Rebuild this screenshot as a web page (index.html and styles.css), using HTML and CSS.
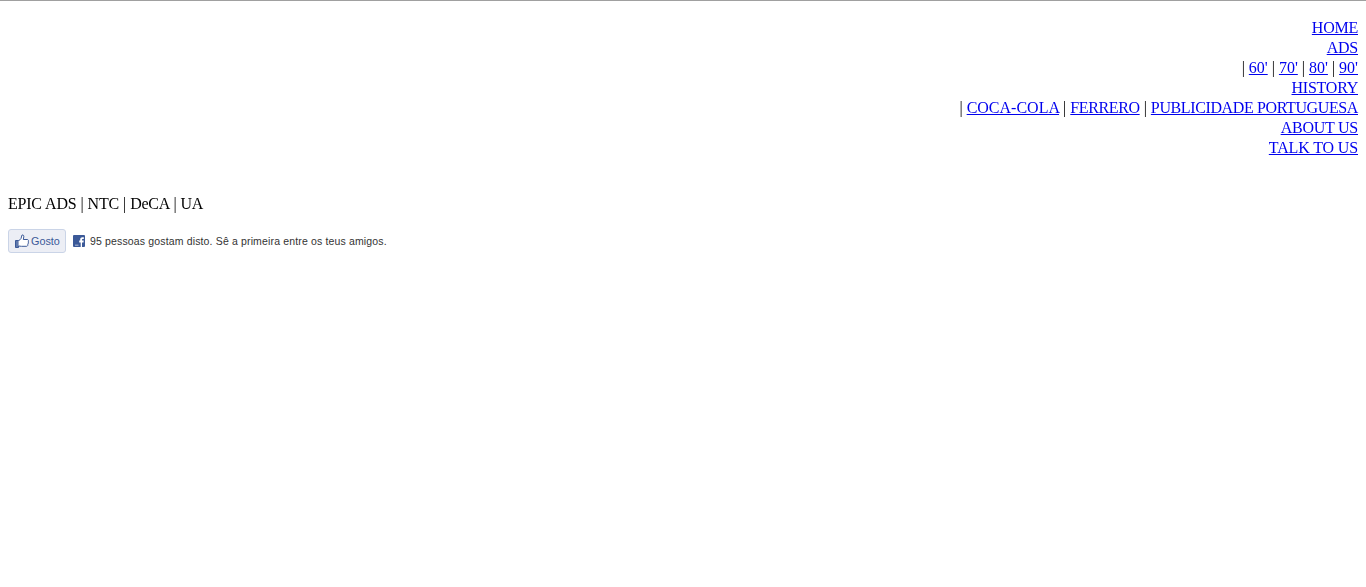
FILE: index.html
```html
<!DOCTYPE html>
<html lang="pt">
<head>
<meta charset="utf-8">
<title>Epic Ads</title>
<link rel="stylesheet" href="styles.css">
</head>
<body>
<nav class="nav">
<div><a class="caps" href="#">HOME</a></div>
<div><a class="caps" href="#">ADS</a></div>
<div>| <a href="#">60'</a> | <a href="#">70'</a> | <a href="#">80'</a> | <a href="#">90'</a></div>
<div><a class="caps" href="#">HISTORY</a></div>
<div>| <a href="#">COCA-COLA</a> | <a class="tight" href="#">FERRERO</a> | <a class="tight" href="#">PUBLICIDADE PORTUGUESA</a></div>
<div><a class="caps" href="#">ABOUT US</a></div>
<div><a class="loose" href="#">TALK TO US</a></div>
</nav>
<p class="credits">EPIC ADS | NTC | DeCA | UA</p>
<div class="like">
<button class="like-btn" type="button">
<svg class="thumb" width="14" height="14" viewBox="0 0 14 14"><path d="M.5 6.500h3v7h-3z" fill="#5f78ab" stroke="#3b5998"/><path d="M3.500 7 6 4.500 7 1c1.300-.3 2 .6 1.800 1.800L8.300 5.500h4c1 0 1.400 1 1 1.700.4.600.3 1.300-.2 1.800.3.600.1 1.300-.4 1.700.2.700-.2 1.600-1.100 1.600H6.500L3.500 12" fill="#fff" stroke="#3b5998"/></svg>
<span>Gosto</span>
</button>
<svg class="fb" width="12" height="12" viewBox="0 0 12 12"><rect width="12" height="12" rx="1" fill="#3b5998"/><path d="M9 12V7.400h1.500l.2-1.800H9V4.700c0-.5.200-.8.900-.8h.9V2.300c-.3 0-.8-.1-1.300-.1-1.400 0-2.300.8-2.300 2.300v1.100H6.200v1.800h1.500V12z" fill="#fff"/><path d="M2 9.500h3.500V11H2z" fill="#8b9dc3"/></svg>
<span class="like-text">95 pessoas gostam disto. Sê a primeira entre os teus amigos.</span>
</div>
</body>
</html>
```
FILE: styles.css
```css
html, body { margin: 0; padding: 0; background: #fff; }
body {
  border-top: 1px solid #a0a0a0;
  padding: 17px 8px 0;
  font-family: "Liberation Serif", "Times New Roman", serif;
  font-size: 16px;
  line-height: 20px;
  color: #000;
}
a { color: #0000ee; text-decoration: underline; }
.nav { text-align: right; will-change: transform; }
.caps { letter-spacing: -0.240px; }
.tight { letter-spacing: -0.380px; }
.loose { letter-spacing: -0.140px; }
.credits { margin: 36px 0 0; letter-spacing: -0.210px; word-spacing: 0.300px; will-change: transform; }
.like {
  display: flex;
  align-items: center;
  margin-top: 15px;
  height: 24px;
  font-family: "Liberation Sans", Arial, sans-serif;
}
.like-btn {
  display: flex;
  align-items: center;
  gap: 2px;
  box-sizing: border-box;
  width: 58px;
  height: 24px;
  margin: 0 7px 0 0;
  padding: 0 0 0 6px;
  border: 1px solid #cad4e7;
  border-radius: 3px;
  background: #eceef5;
  color: #3b5998;
  font: 10.800px/14px "Liberation Sans", Arial, sans-serif;
}
.thumb, .fb { flex: none; }
.like-text {
  margin-left: 5px;
  font-size: 10.500px;
  line-height: 14px;
  color: #333;
  letter-spacing: 0.150px;
}
```
